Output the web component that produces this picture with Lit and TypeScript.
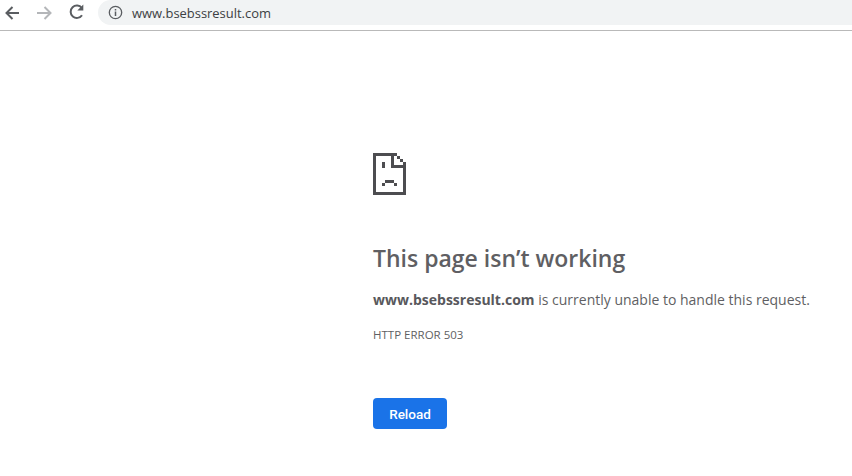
import { LitElement, html, css, svg } from "lit";
import { customElement } from "lit/decorators.js";

@customElement("app-root")
export class AppRoot extends LitElement {
  static styles = css`
    :host {
      display: block;
      width: 852px;
      height: 476px;
      background: #fff;
      font-family: "Open Sans", "Noto Sans", sans-serif;
      overflow: hidden;
    }
    .toolbar {
      display: flex;
      align-items: flex-start;
      height: 30px;
      border-bottom: 1px solid #b9b9b9;
      box-sizing: content-box;
    }
    .nav {
      display: flex;
      width: 98px;
      flex: none;
      padding: 3px 0 0 4px;
      box-sizing: border-box;
      gap: 14px;
    }
    .nav svg { display: block; width: 18px; height: 18px; }
    .omni {
      flex: 1;
      height: 25px;
      background: #f1f3f4;
      border-radius: 13px 0 0 13px;
      display: flex;
      align-items: center;
      padding-left: 10px;
      gap: 9px;
      font-size: 12.95px;
      color: #3c4043;
      box-sizing: border-box;
    }
    .omni svg { width: 15px; height: 15px; flex: none; }
    .main {
      padding: 122px 0 0 373px;
    }
    .sad { display: block; width: 33px; height: 42px; }
    h1 {
      margin: 48px 0 0;
      font-size: 23px;
      line-height: 30px;
      font-weight: 600;
      color: #5f5f63;
      white-space: nowrap;
    }
    .msg {
      margin: 17px 0 0;
      font-size: 14px;
      line-height: 20px;
      color: #5f5f63;
      white-space: nowrap;
    }
    .msg b { font-weight: 700; color: #58585c; }
    .code {
      margin-top: 17px;
      font-size: 11.5px;
      line-height: 16px;
      color: #5f5f63;
    }
    .btn {
      display: block;
      margin-top: 55px;
      width: 74px;
      height: 31px;
      border: 0;
      border-radius: 4px;
      background: #1a73e8;
      color: #fff;
      font: 500 13.5px Roboto, sans-serif;
      padding: 0;
    }
  `;

  render() {
    return html`
      <div class="toolbar">
        <div class="nav">
          <svg viewBox="0 0 18 18" fill="none" stroke="#5a5d61" stroke-width="2">
            <path d="M15 10H2.5M8.5 4 2.5 10 8.5 16" />
          </svg>
          <svg viewBox="0 0 18 18" fill="none" stroke="#b4b6b9" stroke-width="2">
            <path d="M1 10h13M8.5 4 14.5 10 8.5 16" />
          </svg>
          <svg viewBox="0 0 18 18" fill="none" stroke="#5a5d61" stroke-width="2">
            <path d="M14 12.2A6.2 6.2 0 1 1 13.8 5" />
            <path d="M15.3 1.5v6h-6z" fill="#5a5d61" stroke="none" />
          </svg>
        </div>
        <div class="omni">
          <svg viewBox="0 0 16 16" fill="none" stroke="#5a5d61" stroke-width="1.4">
            <circle cx="8" cy="8" r="6.6" />
            <path d="M8 7v4.6M8 4.2v1.6" stroke-width="1.6" />
          </svg>
          <span>www.bsebssresult.com</span>
        </div>
      </div>
      <div class="main">
        <svg class="sad" viewBox="0 0 33 42" fill="#4d4d50">
          ${svg`
            <rect x="0" y="0" width="24" height="3" />
            <rect x="0" y="0" width="3" height="42" />
            <rect x="0" y="39" width="33" height="3" />
            <rect x="30" y="9" width="3" height="33" />
            <rect x="18" y="0" width="3" height="15" />
            <rect x="18" y="12" width="15" height="3" />
            <rect x="24" y="3" width="3" height="3" />
            <rect x="27" y="6" width="3" height="3" />
            <rect x="9" y="9" width="3" height="6" />
            <rect x="12" y="27" width="9" height="3" />
            <rect x="9" y="30" width="3" height="3" />
            <rect x="21" y="30" width="3" height="3" />
          `}
        </svg>
        <h1>This page isn’t working</h1>
        <p class="msg"><b>www.bsebssresult.com</b> is currently unable to handle this request.</p>
        <div class="code">HTTP ERROR 503</div>
        <button class="btn">Reload</button>
      </div>
    `;
  }
}
